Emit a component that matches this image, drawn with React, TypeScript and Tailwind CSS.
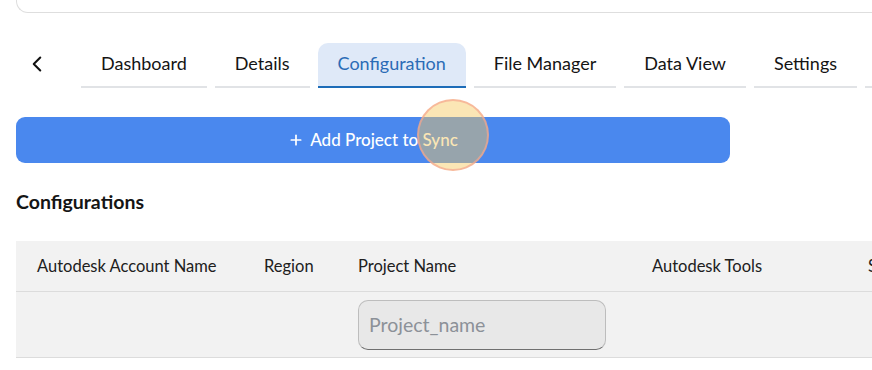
import { ChevronLeft, Plus } from 'lucide-react';

const tabs = ['Dashboard', 'Details', 'Configuration', 'File Manager', 'Data View', 'Settings', 'More']

const columns = [
  { label: 'Autodesk Account Name', w: 'w-[227px]' },
  { label: 'Region', w: 'w-[94px]' },
  { label: 'Project Name', w: 'w-[294px]' },
  { label: 'Autodesk Tools', w: 'w-[216px]' },
  { label: 'Status', w: 'w-[160px]' },
]

const App = () => {
  const active = 'Configuration'

  return (
    <div className="relative h-[370px] w-[872px] overflow-hidden bg-white text-[#1f1f1f]" style={{ fontFamily: 'Lato, "Noto Sans", sans-serif' }}>
      {/* card above, scrolled mostly out of view */}
      <div className="ml-4 h-[13px] rounded-bl-[12px] border-b border-l border-[#dedede]" />

      <div className="mt-[30px] flex items-end pl-[24px]">
        <button className="mb-[11px] mr-[31px] flex h-[26px] w-[26px] items-center justify-center text-[#111]">
          <ChevronLeft size={28} strokeWidth={1.9} />
        </button>
        <div className="flex gap-2 whitespace-nowrap">
          {tabs.map(t => (
            <div
              key={t}
              className={`flex h-[45px] items-center px-5 pb-[3px] text-[18px] ${t === active ? 'rounded-t-[10px] border-b-2 border-[#1d6cb8] bg-[#dfe9f8] text-[#2b6cb6]' : 'border-b-2 border-[#e1e3e6] text-[#141414]'}`}
            >
              {t}
            </div>
          ))}
        </div>
      </div>

      <div className="px-4">
        <button className="mt-[29px] flex h-[46px] w-[714px] items-center justify-center gap-1.5 rounded-[9px] bg-[#4a88ee] text-[17px] font-medium text-white">
          <Plus size={16} strokeWidth={2.6} />
          Add Project to Sync
        </button>

        <h2 className="mt-[25px] text-[19.5px] leading-7 font-bold text-[#151515]">Configurations</h2>

        <div className="mt-[25px] w-[1000px] bg-[#f2f2f2]">
          <div className="flex h-[51px] items-center border-b border-[#dcdcdc]">
            {columns.map(c => (
              <div key={c.label} className={`${c.w} shrink-0 pl-[21px] text-[16.5px] whitespace-nowrap text-[#202020]`}>{c.label}</div>
            ))}
          </div>
          <div className="flex h-[66px] items-center border-b border-[#dcdcdc]">
            <div className="w-[227px] shrink-0" />
            <div className="w-[94px] shrink-0" />
            <div className="w-[294px] shrink-0 pl-[21px]">
              <input
                className="h-[50px] w-[248px] rounded-[10px] border border-[#bdbdbd] border-b-[#6f6f6f] bg-[#e8e8e8] px-[10px] text-[19.5px] outline-none placeholder:text-[#8c9198]"
                placeholder="Project_name"
                readOnly
              />
            </div>
          </div>
        </div>
      </div>

      {/* click indicator */}
      <div className="pointer-events-none absolute top-[99px] left-[417px] h-[72px] w-[72px] rounded-full border-2 border-[#f5a58e]/70 bg-[#f7c75a]/45" />
    </div>
  );
};

export default App
